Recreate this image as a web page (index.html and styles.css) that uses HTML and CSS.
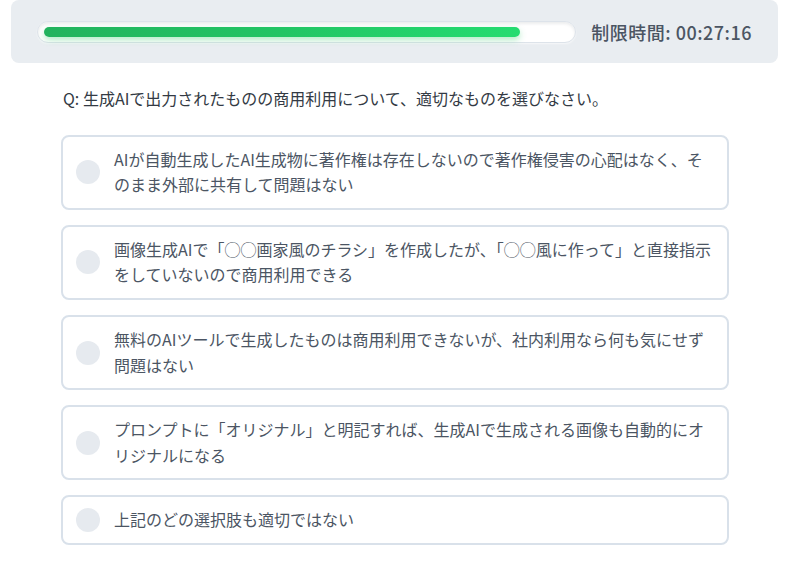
FILE: index.html
```html
<!DOCTYPE html>
<html lang="ja">
<head>
<meta charset="utf-8">
<title>Quiz</title>
<link rel="stylesheet" href="styles.css">
</head>
<body>
<div class="page">
  <header class="status">
    <div class="track"><div class="fill" style="width:91%"></div></div>
    <div class="timer">制限時間: 00:27:16</div>
  </header>
  <main class="quiz">
    <p class="question">Q: 生成AIで出力されたものの商用利用について、適切なものを選びなさい。</p>
    <ul class="options">
      <li class="option"><span class="radio"></span><span class="label">AIが自動生成したAI生成物に著作権は存在しないので著作権侵害の心配はなく、そのまま外部に共有して問題はない</span></li>
      <li class="option"><span class="radio"></span><span class="label">画像生成AIで「◯◯画家風のチラシ」を作成したが、「◯◯風に作って」と直接指示をしていないので商用利用できる</span></li>
      <li class="option"><span class="radio"></span><span class="label">無料のAIツールで生成したものは商用利用できないが、社内利用なら何も気にせず問題はない</span></li>
      <li class="option"><span class="radio"></span><span class="label">プロンプトに「オリジナル」と明記すれば、生成AIで生成される画像も自動的にオリジナルになる</span></li>
      <li class="option"><span class="radio"></span><span class="label">上記のどの選択肢も適切ではない</span></li>
    </ul>
  </main>
</div>
</body>
</html>
```

FILE: styles.css
```css
* { box-sizing: border-box; }
html, body { margin: 0; padding: 0; background: #ffffff; }
body {
  font-family: "Noto Sans CJK JP", "Noto Sans", sans-serif;
  color: #4b5563;
}
.page { padding: 0 10px 0 11px; }
.status {
  display: flex;
  align-items: center;
  gap: 15px;
  background: #e9edf1;
  border-radius: 8px;
  padding: 21px 26px 20px 26px;
}
.track {
  flex: 1;
  height: 22px;
  padding: 6px 7px;
  background: #ffffff;
  border-radius: 11px;
  border: 1px solid #dde3ea;
  box-shadow: inset 0 2px 3px rgba(15, 23, 42, 0.08), 0 1px 2px rgba(255,255,255,0.6);
}
.fill {
  height: 10px;
  margin-top: -1px;
  margin-left: -1px;
  border-radius: 5px;
  background: linear-gradient(90deg, #22b35d 0%, #22c564 50%, #25dc70 100%);
  box-shadow: 0 3px 6px rgba(34, 197, 94, 0.35);
}
.timer {
  font-size: 18px;
  font-weight: 500;
  line-height: 22px;
  letter-spacing: 0.5px;
  color: #4b5563;
  white-space: nowrap;
}
.quiz {
  width: 669px;
  margin: 0 auto;
  padding-left: 1px;
}
.question {
  margin: 23px 0 23px 2px;
  font-size: 16px;
  line-height: 25.6px;
  color: #333a44;
}
.options {
  list-style: none;
  margin: 0;
  padding: 0;
  display: flex;
  flex-direction: column;
  gap: 15px;
}
.option {
  display: flex;
  align-items: center;
  gap: 14px;
  background: #ffffff;
  border: 2px solid #d9e1ea;
  border-radius: 8px;
  padding: 10px 10px 10px 13px;
}
.radio {
  flex: none;
  width: 24px;
  height: 24px;
  border-radius: 50%;
  background: #e6eaef;
}
.label {
  font-size: 16px;
  line-height: 25.6px;
  color: #4b5563;
}
```
